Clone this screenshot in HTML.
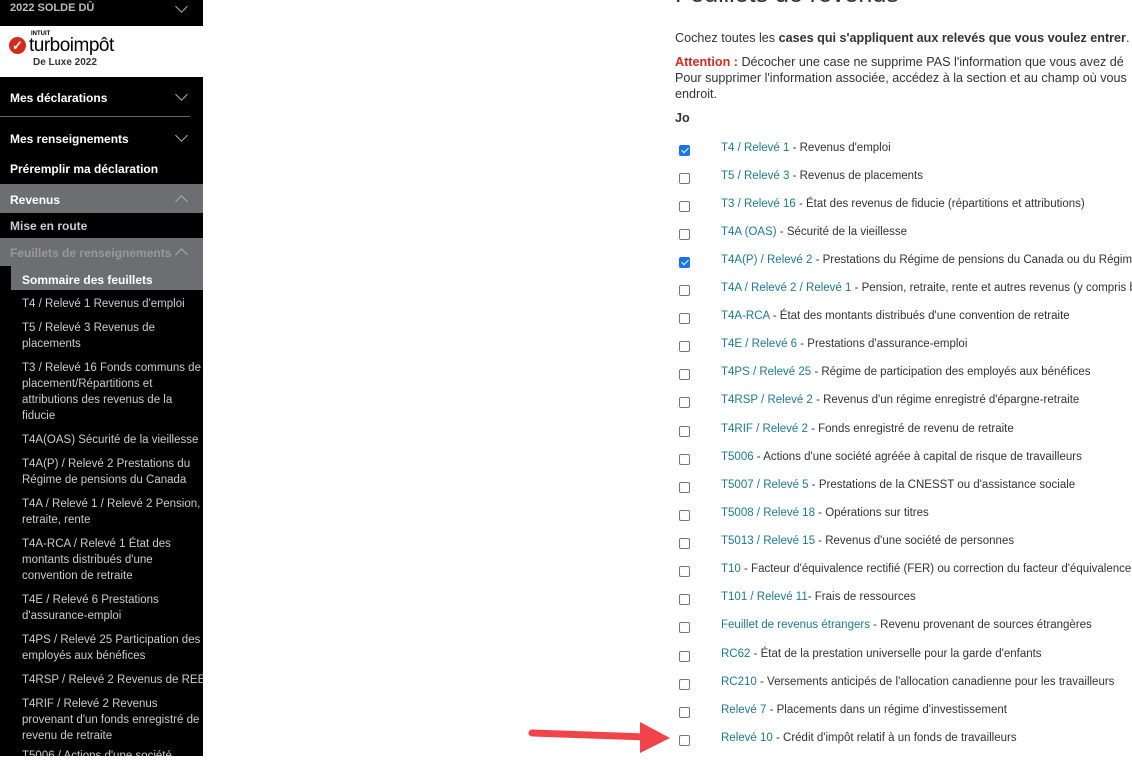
<!DOCTYPE html>
<html><head><meta charset="utf-8"><style>
body{margin:0;width:1132px;height:756px;overflow:hidden;background:#fff;font-family:"Liberation Sans",sans-serif;position:relative}
.sb{position:absolute;left:0;top:0;width:203px;height:756px;background:#000;color:#fff;font-size:12px;overflow:hidden}
.a{position:absolute;left:10px;font-weight:bold;white-space:nowrap}
.chev{position:absolute;left:177px;width:8px;height:8px;border-right:1.5px solid #aaa;border-bottom:1.5px solid #aaa}
.dn{transform:rotate(45deg)}.up{transform:rotate(-135deg)}
.it{position:absolute;left:22px;width:180px;color:#ccc;font-size:11.5px;line-height:16px}
.main{position:absolute;left:675px;top:0;font-size:12.6px;color:#333}
.row{position:absolute;left:679px;font-size:11.5px;color:#333;white-space:nowrap}
.cb{position:absolute;left:0;top:3px;width:9px;height:9px;border:1px solid #777;border-radius:2px;background:#fff}
.ck{background:#1a73e8;border-color:#1a73e8}
.ck:after{content:"";position:absolute;left:2.5px;top:0px;width:3px;height:6px;border-right:1.5px solid #fff;border-bottom:1.5px solid #fff;transform:rotate(45deg)}
.tx{position:absolute;left:42px;top:0}
.l{color:#1b7a94}
</style></head><body>
<div class="sb">
<div class="a" style="top:2px;color:#bbb;font-size:11px">2022 SOLDE DÛ</div><div class="chev dn" style="top:2px"></div>
<div style="position:absolute;left:0;top:26px;width:203px;height:51px;background:#fff">
<div style="position:absolute;left:9px;top:11px;width:17px;height:17px;border-radius:50%;background:#d52b1e;color:#fff;font-size:13px;line-height:17px;text-align:center;font-weight:bold">✓</div>
<div style="position:absolute;left:31px;top:5px;font-size:6px;color:#000;font-weight:bold">INTUIT</div>
<div style="position:absolute;left:29px;top:9px;font-size:19px;color:#000;letter-spacing:-0.5px">turboimpôt</div>
<div style="position:absolute;left:33px;top:31px;font-size:10px;color:#333;font-weight:bold">De Luxe 2022</div>
</div>
<div class="a" style="top:91px">Mes déclarations</div><div class="chev dn" style="top:90px"></div>
<div style="position:absolute;left:0;top:116px;width:190px;height:1px;background:#666"></div>
<div class="a" style="top:132px">Mes renseignements</div><div class="chev dn" style="top:131px"></div>
<div class="a" style="top:162px">Préremplir ma déclaration</div>
<div style="position:absolute;left:0;top:184px;width:203px;height:29px;background:#6d6e71"></div>
<div class="a" style="top:193px">Revenus</div><div class="chev up" style="top:197px"></div>
<div class="a" style="top:219px;color:#ccc">Mise en route</div>
<div style="position:absolute;left:0;top:238px;width:203px;height:28px;background:#6d6e71"></div>
<div class="a" style="top:246px;color:#999">Feuillets de renseignements</div><div class="chev up" style="top:250px"></div>
<div style="position:absolute;left:11px;top:266px;width:192px;height:24px;background:#6d6e71"></div>
<div class="a" style="left:22px;top:273px">Sommaire des feuillets</div>
<div class="it" style="top:296px">T4 / Relevé 1 Revenus d'emploi</div>
<div class="it" style="top:320px">T5 / Relevé 3 Revenus de placements</div>
<div class="it" style="top:360px">T3 / Relevé 16 Fonds communs de placement/Répartitions et attributions des revenus de la fiducie</div>
<div class="it" style="top:432px">T4A(OAS) Sécurité de la vieillesse</div>
<div class="it" style="top:456px">T4A(P) / Relevé 2 Prestations du Régime de pensions du Canada</div>
<div class="it" style="top:496px">T4A / Relevé 1 / Relevé 2 Pension, retraite, rente</div>
<div class="it" style="top:536px">T4A-RCA / Relevé 1 État des montants distribués d'une convention de retraite</div>
<div class="it" style="top:592px">T4E / Relevé 6 Prestations d'assurance-emploi</div>
<div class="it" style="top:632px">T4PS / Relevé 25 Participation des employés aux bénéfices</div>
<div class="it" style="top:672px;white-space:nowrap">T4RSP / Relevé 2 Revenus de REER</div>
<div class="it" style="top:696px">T4RIF / Relevé 2 Revenus provenant d'un fonds enregistré de revenu de retraite</div>
<div class="it" style="top:748px">T5006 / Actions d'une société</div>
</div>
<div class="main">
<div style="position:absolute;top:-20px;font-size:25px;color:#333;white-space:nowrap">Feuillets de revenus</div>
<div style="position:absolute;top:31px;white-space:nowrap">Cochez toutes les <b>cases qui s'appliquent aux relevés que vous voulez entrer</b>.</div>
<div style="position:absolute;top:54px;width:470px;line-height:16px;white-space:nowrap"><b style="color:#d52b1e">Attention :</b> Décocher une case ne supprime PAS l'information que vous avez dé<br>Pour supprimer l'information associée, accédez à la section et au champ où vous<br>endroit.</div>
<div style="position:absolute;top:111px;font-weight:bold">Jo</div>
</div>
<div class="row" style="top:142px"><span class="cb ck"></span><span class="tx"><span class="l">T4 / Relevé 1</span> - Revenus d'emploi</span></div>
<div class="row" style="top:170px"><span class="cb"></span><span class="tx"><span class="l">T5 / Relevé 3</span> - Revenus de placements</span></div>
<div class="row" style="top:198px"><span class="cb"></span><span class="tx"><span class="l">T3 / Relevé 16</span> - État des revenus de fiducie (répartitions et attributions)</span></div>
<div class="row" style="top:226px"><span class="cb"></span><span class="tx"><span class="l">T4A (OAS)</span> - Sécurité de la vieillesse</span></div>
<div class="row" style="top:254px"><span class="cb ck"></span><span class="tx"><span class="l">T4A(P) / Relevé 2</span> - Prestations du Régime de pensions du Canada ou du Régime</span></div>
<div class="row" style="top:282px"><span class="cb"></span><span class="tx"><span class="l">T4A / Relevé 2 / Relevé 1</span> - Pension, retraite, rente et autres revenus (y compris bo</span></div>
<div class="row" style="top:310px"><span class="cb"></span><span class="tx"><span class="l">T4A-RCA</span> - État des montants distribués d'une convention de retraite</span></div>
<div class="row" style="top:338px"><span class="cb"></span><span class="tx"><span class="l">T4E / Relevé 6</span> - Prestations d'assurance-emploi</span></div>
<div class="row" style="top:366px"><span class="cb"></span><span class="tx"><span class="l">T4PS / Relevé 25</span> - Régime de participation des employés aux bénéfices</span></div>
<div class="row" style="top:394px"><span class="cb"></span><span class="tx"><span class="l">T4RSP / Relevé 2</span> - Revenus d'un régime enregistré d'épargne-retraite</span></div>
<div class="row" style="top:423px"><span class="cb"></span><span class="tx"><span class="l">T4RIF / Relevé 2</span> - Fonds enregistré de revenu de retraite</span></div>
<div class="row" style="top:451px"><span class="cb"></span><span class="tx"><span class="l">T5006</span> - Actions d'une société agréée à capital de risque de travailleurs</span></div>
<div class="row" style="top:479px"><span class="cb"></span><span class="tx"><span class="l">T5007 / Relevé 5</span> - Prestations de la CNESST ou d'assistance sociale</span></div>
<div class="row" style="top:507px"><span class="cb"></span><span class="tx"><span class="l">T5008 / Relevé 18</span> - Opérations sur titres</span></div>
<div class="row" style="top:535px"><span class="cb"></span><span class="tx"><span class="l">T5013 / Relevé 15</span> - Revenus d'une société de personnes</span></div>
<div class="row" style="top:563px"><span class="cb"></span><span class="tx"><span class="l">T10</span> - Facteur d'équivalence rectifié (FER) ou correction du facteur d'équivalence</span></div>
<div class="row" style="top:591px"><span class="cb"></span><span class="tx"><span class="l">T101 / Relevé 11</span>- Frais de ressources</span></div>
<div class="row" style="top:619px"><span class="cb"></span><span class="tx"><span class="l">Feuillet de revenus étrangers</span> - Revenu provenant de sources étrangères</span></div>
<div class="row" style="top:648px"><span class="cb"></span><span class="tx"><span class="l">RC62</span> - État de la prestation universelle pour la garde d'enfants</span></div>
<div class="row" style="top:676px"><span class="cb"></span><span class="tx"><span class="l">RC210</span> - Versements anticipés de l'allocation canadienne pour les travailleurs</span></div>
<div class="row" style="top:704px"><span class="cb"></span><span class="tx"><span class="l">Relevé 7</span> - Placements dans un régime d'investissement</span></div>
<div class="row" style="top:732px"><span class="cb"></span><span class="tx"><span class="l">Relevé 10</span> - Crédit d'impôt relatif à un fonds de travailleurs</span></div>
<svg style="position:absolute;left:520px;top:715px" width="160" height="45"><line x1="12" y1="18" x2="125" y2="22" stroke="#f0444a" stroke-width="7" stroke-linecap="round"/><polygon points="120,7 150,23 120,38" fill="#f0444a"/></svg>
</body></html>
